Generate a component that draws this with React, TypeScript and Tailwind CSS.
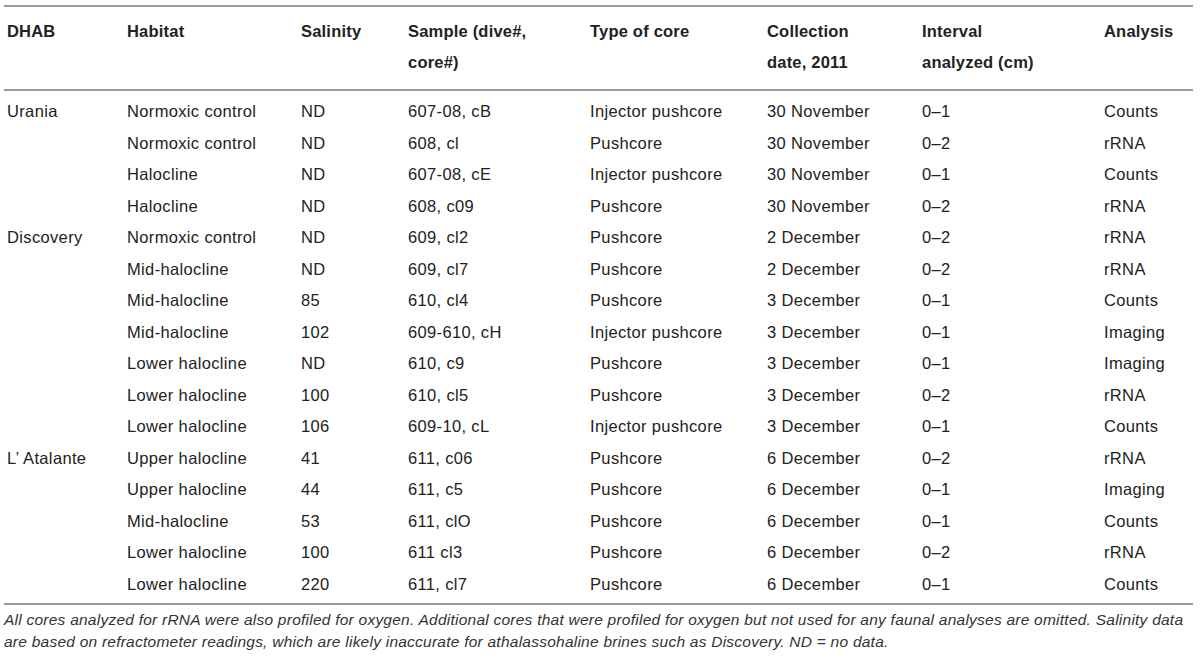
import React from "react";

const rows: [string, string, string, string, string, string, string, string][] = [
  ["Urania", "Normoxic control", "ND", "607-08, cB", "Injector pushcore", "30 November", "0–1", "Counts"],
  ["", "Normoxic control", "ND", "608, cl", "Pushcore", "30 November", "0–2", "rRNA"],
  ["", "Halocline", "ND", "607-08, cE", "Injector pushcore", "30 November", "0–1", "Counts"],
  ["", "Halocline", "ND", "608, c09", "Pushcore", "30 November", "0–2", "rRNA"],
  ["Discovery", "Normoxic control", "ND", "609, cl2", "Pushcore", "2 December", "0–2", "rRNA"],
  ["", "Mid-halocline", "ND", "609, cl7", "Pushcore", "2 December", "0–2", "rRNA"],
  ["", "Mid-halocline", "85", "610, cl4", "Pushcore", "3 December", "0–1", "Counts"],
  ["", "Mid-halocline", "102", "609-610, cH", "Injector pushcore", "3 December", "0–1", "Imaging"],
  ["", "Lower halocline", "ND", "610, c9", "Pushcore", "3 December", "0–1", "Imaging"],
  ["", "Lower halocline", "100", "610, cl5", "Pushcore", "3 December", "0–2", "rRNA"],
  ["", "Lower halocline", "106", "609-10, cL", "Injector pushcore", "3 December", "0–1", "Counts"],
  ["L’ Atalante", "Upper halocline", "41", "611, c06", "Pushcore", "6 December", "0–2", "rRNA"],
  ["", "Upper halocline", "44", "611, c5", "Pushcore", "6 December", "0–1", "Imaging"],
  ["", "Mid-halocline", "53", "611, clO", "Pushcore", "6 December", "0–1", "Counts"],
  ["", "Lower halocline", "100", "611 cl3", "Pushcore", "6 December", "0–2", "rRNA"],
  ["", "Lower halocline", "220", "611, cl7", "Pushcore", "6 December", "0–1", "Counts"],
];

const headers: React.ReactNode[] = [
  "DHAB",
  "Habitat",
  "Salinity",
  <>Sample (dive#,<br />core#)</>,
  "Type of core",
  <>Collection<br />date, 2011</>,
  <>Interval<br />analyzed (cm)</>,
  "Analysis",
];

const grid = "grid grid-cols-[120px_174px_107px_182px_177px_155px_182px_1fr]";

export default function App() {
  return (
    <div
      className="w-[1200px] h-[669px] bg-white text-[#222] overflow-hidden"
      style={{ fontFamily: '"Liberation Sans", Arial, sans-serif' }}
    >
      <div className="pl-[4px] pr-[7px] pt-[5px]">
        <div className="h-[2px] bg-[#9a9a9a]" />
        <div className={`${grid} pl-[3px] pt-[9px] pb-[11px] text-[16.5px] font-bold leading-[31px] tracking-[0.2px]`}>
          {headers.map((h, i) => (
            <div key={i}>{h}</div>
          ))}
        </div>
        <div className="h-[2px] bg-[#9a9a9a]" />
        <div className="pl-[3px] pt-[5px] pb-[3px] text-[16.5px] leading-[31.5px] tracking-[0.35px]">
          {rows.map((r, i) => (
            <div key={i} className={grid}>
              {r.map((c, j) => (
                <div key={j} className="whitespace-nowrap">{c}</div>
              ))}
            </div>
          ))}
        </div>
        <div className="h-[2px] bg-[#9a9a9a]" />
      </div>
      <div className="pl-[4px] pr-[2px] pt-[4px] text-[15.5px] italic leading-[22px] tracking-[0.24px] text-[#333]">
        All cores analyzed for rRNA were also profiled for oxygen. Additional cores that were profiled for oxygen but not used for any faunal analyses are omitted. Salinity data are based on refractometer readings, which are likely inaccurate for athalassohaline brines such as Discovery. ND = no data.
      </div>
    </div>
  );
}
